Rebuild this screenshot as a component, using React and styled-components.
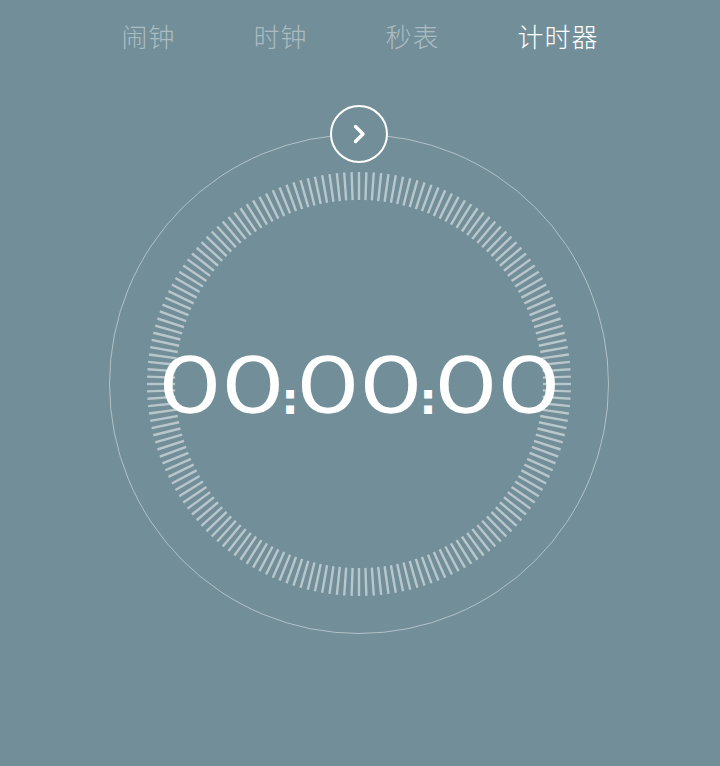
import React from 'react';
import styled, { createGlobalStyle } from 'styled-components';

const GlobalStyle = createGlobalStyle`
  html, body {
    margin: 0;
    padding: 0;
    background: #718e99;
  }
  body {
    font-family: 'Noto Sans CJK SC', 'Noto Sans', sans-serif;
  }
`;

const Page = styled.div`
  width: 720px;
  height: 766px;
  background: #718e99;
  display: flex;
  flex-direction: column;
  align-items: center;
  overflow: hidden;
`;

const Tabs = styled.nav`
  height: 72px;
  display: flex;
  align-items: center;
  justify-content: center;
  gap: 78px;
`;

const Tab = styled.div`
  font-family: 'Noto Sans CJK SC', sans-serif;
  font-size: 26px;
  font-weight: 300;
  line-height: 1;
  letter-spacing: 1px;
  color: ${(p) => (p.$active ? '#ffffff' : 'rgba(255, 255, 255, 0.42)')};
`;

const Dial = styled.div`
  position: relative;
  margin-top: 62px;
  margin-right: 2px;
  width: 500px;
  height: 500px;
  display: grid;
  place-items: center;
`;

const DialArt = styled.svg`
  position: absolute;
  inset: 0;
`;

const StartButton = styled.button`
  position: absolute;
  top: -29px;
  left: 50%;
  transform: translateX(-50%);
  width: 58px;
  height: 58px;
  border-radius: 50%;
  border: 2px solid #ffffff;
  background: #718e99;
  padding: 0;
  display: grid;
  place-items: center;
  cursor: pointer;
`;

const Time = styled.div`
  position: relative;
  display: flex;
  align-items: flex-end;
  height: 58px;
  color: #ffffff;
`;

/* the face draws round zeros; widen a light sans 0 to get there */
const Digit = styled.span`
  display: inline-block;
  box-sizing: border-box;
  width: 56px;
  margin: 0 3.5px;
  padding-right: 10px;
  letter-spacing: -10px;
  text-align: center;
  font-family: 'Inter', sans-serif;
  font-weight: 300;
  font-size: 76px;
  line-height: 58px;
  height: 58px;
  -webkit-text-stroke: 1.3px #ffffff;
  transform: scaleX(1.35);
`;

const Colon = styled.span`
  display: inline-flex;
  justify-content: center;
  box-sizing: border-box;
  width: 12px;
  padding-right: 6px;
  letter-spacing: -6px;
  font-family: 'DejaVu Sans', sans-serif;
  font-size: 44px;
  font-weight: 700;
  line-height: 1;
  margin-bottom: -8px;
`;

const ticks = Array.from({ length: 180 }, (_, i) => {
  const a = (i * 2 * Math.PI) / 180;
  const s = Math.sin(a);
  const c = Math.cos(a);
  return {
    x1: 250 + 184 * s,
    y1: 250 - 184 * c,
    x2: 250 + 212 * s,
    y2: 250 - 212 * c,
  };
});

const App = () => {
  const time = '00:00:00';
  return (
    <Page>
      <GlobalStyle />
      <Tabs>
        <Tab>闹钟</Tab>
        <Tab>时钟</Tab>
        <Tab>秒表</Tab>
        <Tab $active>计时器</Tab>
      </Tabs>
      <Dial>
        <DialArt width="500" height="500" viewBox="0 0 500 500">
          <circle cx="250" cy="250" r="249.5" fill="none" stroke="rgba(255,255,255,0.45)" strokeWidth="1" />
          {ticks.map((t, i) => (
            <line key={i} {...t} stroke="rgba(255,255,255,0.5)" strokeWidth="2.4" />
          ))}
        </DialArt>
        <StartButton aria-label="开始">
          <svg width="20" height="20" viewBox="0 0 20 20">
            <polyline points="6.5,2.5 14,10 6.5,17.5" fill="none" stroke="#ffffff" strokeWidth="3.4" strokeLinecap="round" strokeLinejoin="round" />
          </svg>
        </StartButton>
        <Time>
          {time.split('').map((ch, i) =>
            ch === ':' ? <Colon key={i}>:</Colon> : <Digit key={i}>{ch}</Digit>
          )}
        </Time>
      </Dial>
    </Page>
  );
};

export default App;
